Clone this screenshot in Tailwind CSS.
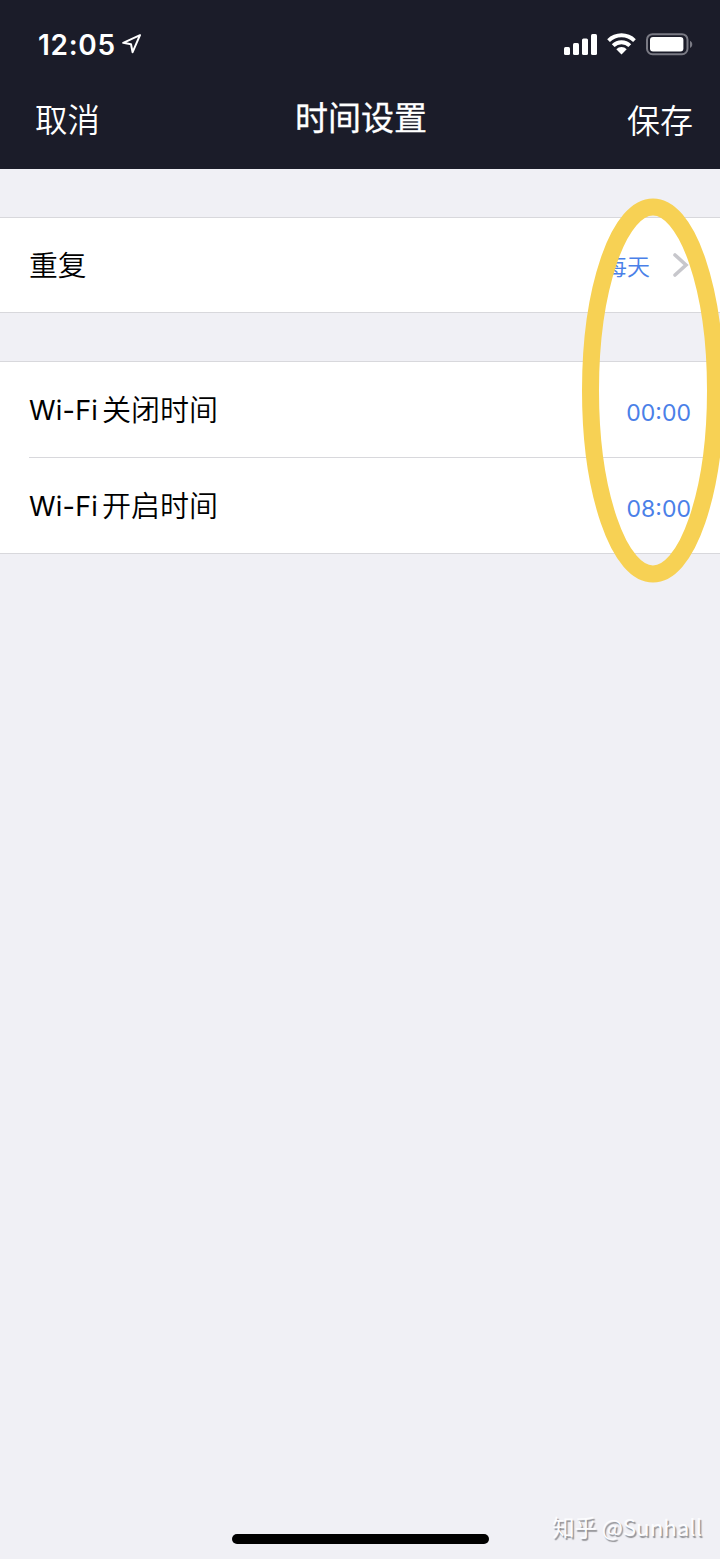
<!DOCTYPE html>
<html lang="zh-CN">
<head>
<meta charset="utf-8">
<title>时间设置</title>
<script src="https://cdn.jsdelivr.net/npm/@tailwindcss/browser@4"></script>
</head>
<body class="bg-[#f0f0f5]">
<div class="relative flex h-[1559px] w-[720px] flex-col overflow-hidden bg-[#f0f0f5] font-['Inter','Noto_Sans_CJK_SC',sans-serif] text-black">
  <header class="h-[169px] shrink-0 bg-[#1b1c29] text-white">
    <div class="flex h-[88px] items-center justify-between pr-[27px] pl-[38px]">
      <div class="flex items-center gap-[6px]">
        <span class="pt-[2px] text-[28px] leading-none font-semibold tracking-[0.7px]">12:05</span>
        <svg width="20" height="20" viewBox="0 0 20 20" fill="none" stroke="white" stroke-width="2" stroke-linejoin="round"><path d="M18 1.2L1.2 8.8L9 10.2L10.6 18.2Z"/></svg>
      </div>
      <svg width="130" height="24" viewBox="0 0 130 24" fill="white">
        <rect x="1" y="15" width="6" height="8" rx="1.5"/>
        <rect x="10" y="11" width="6" height="12" rx="1.5"/>
        <rect x="19" y="6.5" width="6" height="16.5" rx="1.5"/>
        <rect x="28" y="2" width="6" height="21" rx="1.5"/>
        <path d="M44.2 7.2a20.3 20.3 0 0 1 28.6 0l-2.7 2.8a16.5 16.5 0 0 0-23.2 0z"/>
        <path d="M48.8 12.2a13.7 13.7 0 0 1 19.4 0l-2.8 2.8a9.8 9.8 0 0 0-13.8 0z"/>
        <path d="M53.3 17.2a7.4 7.4 0 0 1 10.4 0l-5.2 5.2z"/>
        <rect x="84" y="2.2" width="40.5" height="20" rx="5.5" fill="none" stroke="#7a7a84" stroke-width="2"/>
        <rect x="87" y="5" width="33.4" height="14.4" rx="3"/>
        <path d="M127 8.7c3 1.5 3 5.8 0 7.3z" fill="#7a7a84"/>
      </svg>
    </div>
    <div class="flex h-[66px] items-center justify-between pr-[27px] pl-[35px] leading-none">
      <span class="text-[32.5px] font-[350]">取消</span>
      <span class="-mt-[6px] pr-[5px] text-[33px] font-normal [-webkit-text-stroke:0.3px_white]">时间设置</span>
      <span class="text-[33px] font-[350]">保存</span>
    </div>
  </header>

  <section class="mt-[48px] flex h-[96px] shrink-0 items-center justify-between border-y border-[#d8d8dc] bg-white pr-[31px] pl-[29px]">
    <span class="pt-[2px] text-[28.8px] leading-none font-[350]">重复</span>
    <div class="flex items-center gap-[23px]">
      <span class="pt-[5px] text-[23px] leading-none font-[350] text-[#4a80e8]">每天</span>
      <svg width="16" height="24" viewBox="0 0 16 24" fill="none" stroke="#c7c7cc" stroke-width="3.6" stroke-linecap="round"><path d="M2 2L13 12L2 22"/></svg>
    </div>
  </section>

  <section class="mt-[48px] shrink-0 border-y border-[#d8d8dc] bg-white pl-[29px]">
    <div class="flex h-[96px] items-center justify-between border-b border-[#d8d8dc] pr-[29px]">
      <span class="flex pt-[2px] text-[29px] leading-none font-[350]"><span class="w-[73px] text-[27px] leading-[29px] font-normal tracking-[0.2px]">Wi-Fi</span>关闭时间</span>
      <span class="pt-[7px] text-[23px] leading-none text-[#4a80e8]">00:00</span>
    </div>
    <div class="flex h-[95px] items-center justify-between pr-[29px]">
      <span class="flex pt-[2px] text-[29px] leading-none font-[350]"><span class="w-[73px] text-[27px] leading-[29px] font-normal tracking-[0.2px]">Wi-Fi</span>开启时间</span>
      <span class="pt-[7px] text-[23px] leading-none text-[#4a80e8]">08:00</span>
    </div>
  </section>

  <footer class="mt-auto flex h-[60px] shrink-0 items-start justify-between pr-[18px] pl-[232px]">
    <div class="mt-[35px] h-[9.5px] w-[257px] rounded-full bg-black"></div>
    <span class="mt-[14px] font-['Noto_Sans_CJK_SC',sans-serif] text-[22.3px] leading-[26px] whitespace-nowrap text-[#fcfcfe] [text-shadow:1.5px_1.5px_1px_#909094]">知乎 @Sunhall</span>
  </footer>

  <svg class="absolute top-[190px] left-[570px]" width="150" height="400" viewBox="570 190 150 400" fill="none"><ellipse cx="653" cy="390.5" rx="62.5" ry="183.5" stroke="#f7d154" stroke-width="17"/></svg>
</div>
</body>
</html>
